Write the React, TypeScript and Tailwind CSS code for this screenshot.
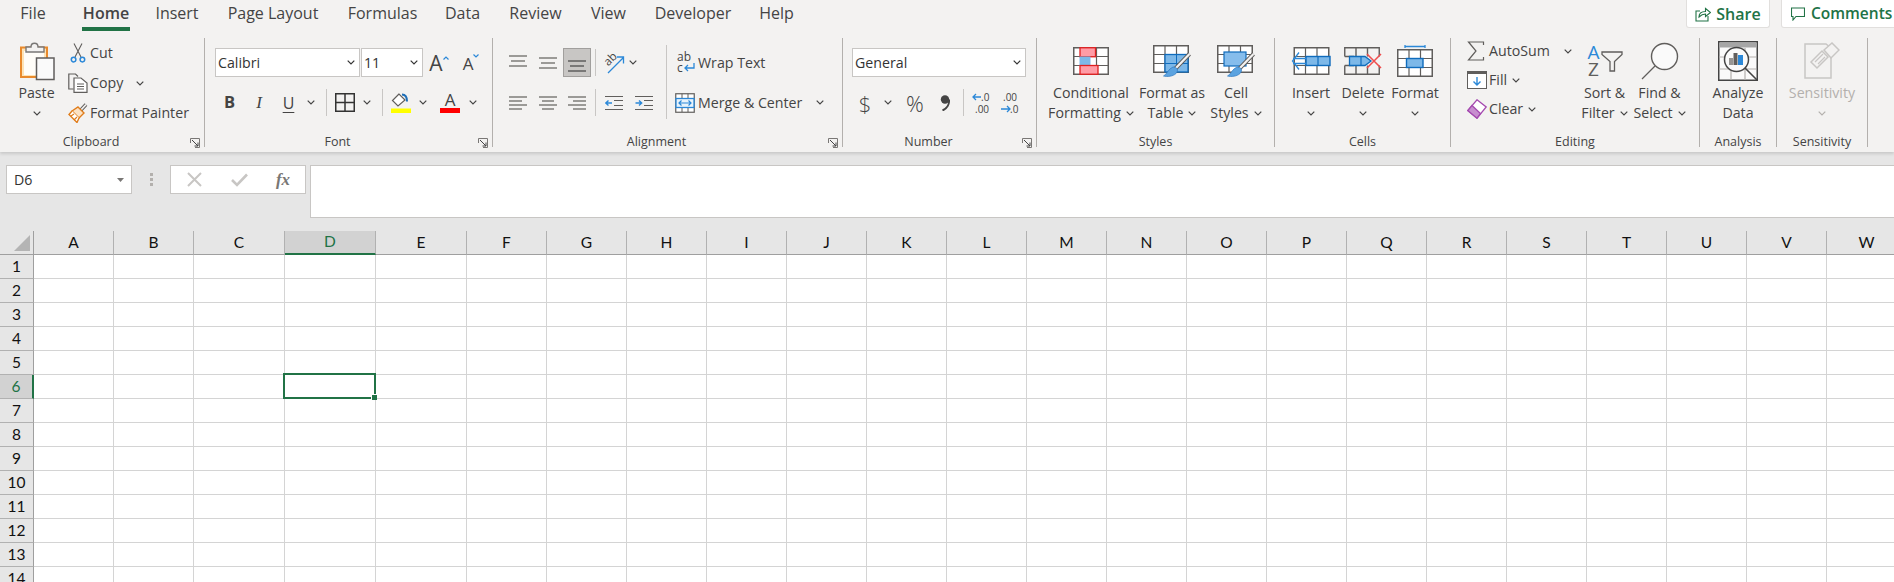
import React from "react";

const GREEN = "#217346";

function Chev({ color = "#444444" }: { color?: string }) {
  return (
    <svg width="8" height="5" viewBox="0 0 8 5" className="shrink-0">
      <polyline points="0.7,0.7 4,4 7.3,0.7" fill="none" stroke={color} strokeWidth="1.2" />
    </svg>
  );
}

function Launcher() {
  return (
    <svg width="10" height="10" viewBox="0 0 10 10">
      <path d="M0.5 5V0.5H9.5V9.5H5" fill="none" stroke="#797775" strokeWidth="1" />
      <path d="M2 2L8 8M8 4.5V8H4.5" fill="none" stroke="#444444" strokeWidth="1" />
    </svg>
  );
}

function Group({ w, label, launcher, children }: { w: string; label: string; launcher?: boolean; children: React.ReactNode }) {
  return (
    <div className={`${w} h-[109px] shrink-0 flex flex-col border-r border-[#b3b0ad]`}>
      <div className="h-[95px] shrink-0 flex">{children}</div>
      <div className="h-[19px] shrink-0 flex items-center text-[12.5px] text-[#444444]">
        <span className="flex-1 text-center">{label}</span>
        {launcher ? (
          <span className="w-[22px] shrink-0 flex justify-end pr-[4px]">
            <Launcher />
          </span>
        ) : null}
      </div>
    </div>
  );
}

function Big({ w, icon, a, b, chev, muted }: { w: string; icon: React.ReactNode; a: string; b?: string; chev?: boolean; muted?: boolean }) {
  const c = muted ? "text-[#b3b0ad]" : "text-[#444444]";
  return (
    <div className={`${w} shrink-0 flex flex-col items-center text-[14.2px] whitespace-nowrap ${c}`}>
      <div className="h-[45px] flex items-center justify-center">{icon}</div>
      <div className="h-[20px] leading-[20px]">{a}</div>
      <div className="h-[20px] leading-[20px] flex items-center gap-[5px]">
        {b ? <span>{b}</span> : null}
        {chev ? <Chev color={muted ? "#b3b0ad" : "#444444"} /> : null}
      </div>
    </div>
  );
}

function Slot({ w, children }: { w: string; children?: React.ReactNode }) {
  return <div className={`${w} h-full shrink-0 flex items-center justify-center`}>{children}</div>;
}

function Sep({ w }: { w: string }) {
  return (
    <div className={`${w} h-full shrink-0 flex items-center justify-center`}>
      <div className="w-px h-[27px] bg-[#c8c6c4]" />
    </div>
  );
}

function Box({ w, text, chevSlot }: { w: string; text: string; chevSlot: string }) {
  return (
    <div className={`${w} h-[29px] shrink-0 bg-white border border-[#c8c6c4] flex items-center justify-between text-[14.2px] text-[#333333]`}>
      <span className="pl-[2px]">{text}</span>
      <span className={`${chevSlot} flex justify-center`}>
        <Chev color="#333333" />
      </span>
    </div>
  );
}

function Lines({ ys, x1s, x2s, color = "#605e5c" }: { ys: number[]; x1s: number[]; x2s: number[]; color?: string }) {
  return (
    <svg width="18" height="16" viewBox="0 0 18 16">
      {ys.map((y, i) => (
        <line key={i} x1={x1s[i]} x2={x2s[i]} y1={y} y2={y} stroke={color} strokeWidth="1.2" />
      ))}
    </svg>
  );
}

function GridLines() {
  return (
    <g fill="none" stroke="#605e5c" strokeWidth="1.5">
      <rect x="0.75" y="0.75" width="34.5" height="26.5" fill="#ffffff" />
      <path d="M12 0.75V27.25M23.5 0.75V27.25M0.75 9.5H35.25M0.75 18.5H35.25" strokeWidth="1.2" />
    </g>
  );
}

function Brush() {
  return (
    <g>
      <path d="M36.5 9L22 24" stroke="#605e5c" strokeWidth="4" fill="none" />
      <path d="M36.5 9L22 24" stroke="#f3f2f1" strokeWidth="2.2" fill="none" />
      <path d="M20 22C24 22 26 25 23 28.5C20 31.5 14 32 10.5 31C14 29.5 15 24 20 22Z" fill="#5ba3e0" stroke="#2b79c2" strokeWidth="0.7" />
    </g>
  );
}

const IconPaste = (
  <svg width="36" height="40" viewBox="0 0 36 40">
    <rect x="2" y="6.5" width="26" height="29.5" fill="#fde3b6" stroke="#e98a2c" strokeWidth="2" />
    <rect x="5" y="10" width="20" height="24" fill="#fffdf8" />
    <path d="M7 11V6H12C12 1 19 1 19 6H25V11Z" fill="#f3f2f1" stroke="#797775" strokeWidth="1.4" />
    <rect x="17.5" y="17" width="17.5" height="21.5" fill="#fafafa" stroke="#605e5c" strokeWidth="1.5" />
  </svg>
);

const IconCut = (
  <svg width="16" height="20" viewBox="0 0 16 20">
    <path d="M4 0.5L11 14M12 0.5L5 14" fill="none" stroke="#605e5c" strokeWidth="1.1" />
    <circle cx="3.6" cy="16.6" r="2.3" fill="none" stroke="#2b88d8" strokeWidth="1.5" />
    <circle cx="12.4" cy="16.6" r="2.3" fill="none" stroke="#2b88d8" strokeWidth="1.5" />
  </svg>
);

const IconCopy = (
  <svg width="20" height="20" viewBox="0 0 20 20">
    <path d="M5.5 16H0.8V1H7.5L10 3.5" fill="none" stroke="#605e5c" strokeWidth="1.2" />
    <path d="M6 5H13L19 10V19.3H6Z" fill="#ffffff" stroke="#605e5c" strokeWidth="1.2" />
    <path d="M9 11H16M9 13.5H16M9 16H16" stroke="#605e5c" strokeWidth="1" />
  </svg>
);

const IconPainter = (
  <svg width="20" height="20" viewBox="0 0 20 20">
    <path d="M12 8L18 1.5" stroke="#605e5c" strokeWidth="3.6" fill="none" />
    <path d="M12 8L18 1.5" stroke="#f3f2f1" strokeWidth="1.8" fill="none" />
    <path d="M10 4L16 10L11 15L4 8Z" fill="#fbe2c4" stroke="#e07c1a" strokeWidth="1.4" />
    <path d="M4 8L1 11.5L9 19.5L11 15" fill="#ffffff" stroke="#e07c1a" strokeWidth="1.4" />
    <path d="M3 13L6 11M6 17L9 14" stroke="#e07c1a" strokeWidth="1.2" />
  </svg>
);

const IconCond = (
  <svg width="36" height="28" viewBox="0 0 36 28">
    <GridLines />
    <rect x="7" y="0.75" width="15.5" height="9" fill="#ff9ca6" stroke="#e02020" strokeWidth="1.3" />
    <rect x="7" y="10" width="10" height="8.5" fill="#7db8e8" stroke="#7db8e8" />
    <rect x="7" y="18.5" width="18" height="8.75" fill="#ff9ca6" stroke="#e02020" strokeWidth="1.3" />
  </svg>
);

const IconTable = (
  <svg width="38" height="32" viewBox="0 0 38 32">
    <GridLines />
    <rect x="12" y="9.5" width="23" height="17.5" fill="#7db8e8" stroke="#0f6cbd" strokeWidth="1.3" />
    <path d="M23.5 9.5V27M12 18.5H35" stroke="#0f6cbd" strokeWidth="1" />
    <Brush />
  </svg>
);

const IconStyles = (
  <svg width="38" height="32" viewBox="0 0 38 32">
    <GridLines />
    <rect x="7" y="7" width="22" height="14" fill="#86bdec" stroke="#0f6cbd" strokeWidth="1.2" />
    <Brush />
  </svg>
);

const IconInsert = (
  <svg width="40" height="28" viewBox="0 0 40 28">
    <g transform="translate(2.5,0)">
      <GridLines />
    </g>
    <rect x="15" y="9.5" width="24" height="9" fill="#7db8e8" stroke="#0f6cbd" strokeWidth="1.4" />
    <path d="M27 9.5V18.5" stroke="#0f6cbd" strokeWidth="1.2" />
    <path d="M8 5.5L1.5 14L8 22.5M2 11.5H16M2 16.5H16" fill="none" stroke="#2b88d8" strokeWidth="1.3" />
  </svg>
);

const IconDelete = (
  <svg width="38" height="28" viewBox="0 0 38 28">
    <path d="M0.75 9.5V0.75H35.25V9.5M0.75 18.5V27.25H35.25V18.5M12 0.75V9.5M23.5 0.75V9.5M12 18.5V27.25M23.5 18.5V27.25M0.75 9.5H10M0.75 18.5H10" fill="none" stroke="#605e5c" strokeWidth="1.4" />
    <path d="M5.5 9.5H21L27 14L21 18.5H5.5Z" fill="#7db8e8" stroke="#0f6cbd" strokeWidth="1.3" />
    <path d="M17 9.5V18.5" stroke="#0f6cbd" strokeWidth="1.2" />
    <path d="M23 7L37 21M37 7L23 21" stroke="#ef4d4d" strokeWidth="1.5" />
  </svg>
);

const IconFormat = (
  <svg width="36" height="32" viewBox="0 0 36 32">
    <path d="M8 1.5H28M8 0V3M28 0V3" stroke="#2b88d8" strokeWidth="1.3" />
    <g transform="translate(0,4)">
      <GridLines />
      <rect x="9.5" y="9.5" width="16.5" height="9" fill="#7db8e8" stroke="#0f6cbd" strokeWidth="1.4" />
    </g>
  </svg>
);

const IconSigma = (
  <svg width="18" height="20" viewBox="0 0 18 20" className="-ml-[3px]">
    <path d="M16.5 4V1H1.5L9 10L1.5 19H16.5V16" fill="none" stroke="#605e5c" strokeWidth="1.2" />
  </svg>
);

const IconFill = (
  <svg width="20" height="18" viewBox="0 0 20 18">
    <rect x="0.5" y="0.5" width="19" height="17" fill="#ffffff" stroke="#605e5c" strokeWidth="1" />
    <rect x="0" y="0" width="20" height="3" fill="#605e5c" />
    <path d="M10 6V14M6.5 10.5L10 14L13.5 10.5" fill="none" stroke="#2b88d8" strokeWidth="1.4" />
  </svg>
);

const IconClear = (
  <svg width="20" height="20" viewBox="0 0 20 20">
    <path d="M10 0.8L19.2 8L10 19.2L0.8 11.5Z" fill="#ffffff" stroke="#a54ab0" strokeWidth="1.3" />
    <path d="M5 6.5L13.5 14.5L10 19.2L0.8 11.5Z" fill="#c78ecf" stroke="#a54ab0" strokeWidth="1.3" />
  </svg>
);

const IconSort = (
  <div className="flex items-center">
    <div className="w-[15px] flex flex-col items-center text-[19px] leading-[17px]">
      <span className="text-[#2b88d8]">A</span>
      <span className="text-[#605e5c]">Z</span>
    </div>
    <svg width="22" height="22" viewBox="0 0 22 22" className="mt-[2px]">
      <path d="M1 1H21V3.5L13.5 10.5V20H9V10.5L1 3.5Z" fill="none" stroke="#605e5c" strokeWidth="1.3" />
    </svg>
  </div>
);

const IconFind = (
  <svg width="38" height="38" viewBox="0 0 38 38">
    <circle cx="23.5" cy="14.5" r="13" fill="#fafafa" stroke="#605e5c" strokeWidth="1.4" />
    <path d="M14 24L1 37" stroke="#605e5c" strokeWidth="1.3" />
  </svg>
);

const IconAnalyze = (
  <svg width="40" height="40" viewBox="0 0 40 40">
    <rect x="0.75" y="0.75" width="38.5" height="38.5" fill="#fafafa" stroke="#444444" strokeWidth="1.5" />
    <rect x="1.5" y="1.5" width="37" height="5" fill="#a6a6a6" />
    <path d="M1 16H38M1 28H38M13 7V39M27 7V39" stroke="#b3b0ad" strokeWidth="1.2" />
    <circle cx="18.5" cy="18.5" r="12" fill="#fafafa" stroke="#444444" strokeWidth="1.5" />
    <path d="M27 27L39 39" stroke="#444444" strokeWidth="1.6" />
    <rect x="11" y="17" width="4" height="7" fill="#979593" />
    <rect x="15.5" y="12" width="4" height="12" fill="#605e5c" />
    <rect x="20" y="14" width="5" height="10" fill="#2b88d8" />
  </svg>
);

const IconSens = (
  <svg width="36" height="38" viewBox="0 0 36 38">
    <path d="M1 2H22L27 6V36H1Z" fill="#f3f2f1" stroke="#c8c6c4" strokeWidth="1.5" />
    <path d="M7 20L18 9L24 15L13 26Z" fill="#f3f2f1" stroke="#c8c6c4" strokeWidth="1.5" />
    <path d="M11 20L19 12M14 22L21 15" stroke="#c8c6c4" strokeWidth="1.2" />
    <path d="M20 8L28 1L35 8L27 16Z" fill="#f3f2f1" stroke="#c8c6c4" strokeWidth="1.5" />
  </svg>
);

const TAB_CLS = "h-[27px] leading-[27px] shrink-0 flex justify-center text-[16px] whitespace-nowrap text-[#444444]";

const COLS = ["A", "B", "C", "D", "E", "F", "G", "H", "I", "J", "K", "L", "M", "N", "O", "P", "Q", "R", "S", "T", "U", "V", "W"];
const ROWS = [1, 2, 3, 4, 5, 6, 7, 8, 9, 10, 11, 12, 13, 14];

export default function App() {
  return (
    <div className="w-[1894px] h-[582px] overflow-hidden bg-[#e6e6e6] [font-family:'Open_Sans',sans-serif]">
      {/* Ribbon */}
      <div className="h-[152px] bg-[#f3f2f1] shadow-[0_2px_3px_rgba(0,0,0,0.13)] relative">
        <div className="h-[38px] flex items-start">
          <div className={`${TAB_CLS} ml-[21px] w-[24px]`}>File</div>
          <div className="ml-[37px] w-[48px] shrink-0 flex flex-col">
            <div className={`${TAB_CLS} font-semibold`}>Home</div>
            <div className="h-[4px] bg-[#217346]" />
          </div>
          <div className={`${TAB_CLS} ml-[26px] w-[42px]`}>Insert</div>
          <div className={`${TAB_CLS} ml-[29px] w-[92px]`}>Page Layout</div>
          <div className={`${TAB_CLS} ml-[29px] w-[69px]`}>Formulas</div>
          <div className={`${TAB_CLS} ml-[28px] w-[35px]`}>Data</div>
          <div className={`${TAB_CLS} ml-[30px] w-[51px]`}>Review</div>
          <div className={`${TAB_CLS} ml-[30px] w-[35px]`}>View</div>
          <div className={`${TAB_CLS} ml-[29px] w-[76px]`}>Developer</div>
          <div className={`${TAB_CLS} ml-[29px] w-[33px]`}>Help</div>
          <div className="ml-auto w-[84px] h-[28px] shrink-0 bg-white border border-[#e1dfdd] border-t-0 rounded-b-[3px] flex items-center justify-center gap-[5px] text-[16px] font-semibold text-[#217346]">
            <svg width="16" height="16" viewBox="0 0 16 16" className="shrink-0">
              <path d="M5 5H1V15H13V10" fill="none" stroke={GREEN} strokeWidth="1.1" />
              <path d="M4 11C4 7 7 5.5 10.5 5.5V2.5L15.5 6.5L10.5 10.5V8C8 8 6 9 4 11Z" fill="none" stroke={GREEN} strokeWidth="1.1" />
            </svg>
            Share
          </div>
          <div className="ml-[11px] mr-[-30px] w-[143px] h-[28px] shrink-0 bg-white border border-[#e1dfdd] border-t-0 rounded-b-[3px] flex items-center pl-[9px] gap-[6px] text-[15.5px] font-semibold text-[#217346]">
            <svg width="14" height="14" viewBox="0 0 14 14" className="shrink-0">
              <path d="M0.5 1H13.5V9.5H5L2 13V9.5H0.5Z" fill="none" stroke={GREEN} strokeWidth="1.1" />
            </svg>
            Comments
          </div>
        </div>

        <div className="flex">
          <Group w="w-[205px]" label="Clipboard" launcher>
            <div className="pl-[7px]">
              <Big w="w-[59px]" icon={IconPaste} a="Paste" chev />
            </div>
            <div className="flex flex-col text-[14.2px] text-[#444444] whitespace-nowrap">
              <div className="h-[30px] flex items-center">
                <Slot w="w-[24px]">{IconCut}</Slot>
                Cut
              </div>
              <div className="h-[30px] flex items-center">
                <Slot w="w-[24px]">{IconCopy}</Slot>
                Copy
                <span className="ml-[13px]"><Chev /></span>
              </div>
              <div className="h-[30px] flex items-center">
                <Slot w="w-[24px]">{IconPainter}</Slot>
                Format Painter
              </div>
            </div>
          </Group>

          <Group w="w-[288px]" label="Font" launcher>
            <div className="pl-[10px] pt-[10px] flex flex-col text-[#444444]">
              <div className="h-[29px] flex items-center">
                <Box w="w-[145px]" text="Calibri" chevSlot="w-[16px]" />
                <div className="w-px shrink-0" />
                <Box w="w-[62px]" text="11" chevSlot="w-[16px]" />
                <Slot w="w-[32px]">
                  <div className="flex items-start text-[21px] leading-[24px]">
                    A
                    <svg width="6" height="4" viewBox="0 0 6 4" className="mt-[5px]"><polyline points="0.5,3.5 3,1 5.5,3.5" fill="none" stroke="#2b88d8" strokeWidth="1.2" /></svg>
                  </div>
                </Slot>
                <Slot w="w-[32px]">
                  <div className="flex items-start text-[17px] leading-[22px] pt-[3px]">
                    A
                    <svg width="6" height="4" viewBox="0 0 6 4" className="mt-[1px]"><polyline points="0.5,0.5 3,3 5.5,0.5" fill="none" stroke="#2b88d8" strokeWidth="1.2" /></svg>
                  </div>
                </Slot>
              </div>
              <div className="h-[29px] mt-[11px] flex items-center">
                <Slot w="w-[29px]"><span className="font-bold text-[16.5px] text-[#444444]">B</span></Slot>
                <Slot w="w-[30px]"><span className="italic text-[17px] [font-family:'Liberation_Serif',serif]">I</span></Slot>
                <Slot w="w-[29px]"><span className="underline underline-offset-[3px] text-[16px]">U</span></Slot>
                <Slot w="w-[16px]"><Chev /></Slot>
                <Sep w="w-[14px]" />
                <Slot w="w-[24px]">
                  <svg width="20" height="19" viewBox="0 0 20 19">
                    <rect x="0.75" y="0.75" width="18.5" height="17.5" fill="none" stroke="#333333" strokeWidth="1.5" />
                    <path d="M10 0.75V18.25M0.75 9.5H19.25" stroke="#333333" strokeWidth="1.5" />
                  </svg>
                </Slot>
                <Slot w="w-[20px]"><Chev /></Slot>
                <Sep w="w-[10px]" />
                <Slot w="w-[28px]">
                  <svg width="20" height="20" viewBox="0 0 20 20">
                    <path d="M8 1L1.5 7.5L7 13L14 7Z" fill="#ffffff" stroke="#605e5c" strokeWidth="1.2" />
                    <path d="M11 1.5C15 1.5 16 5 16 8.5" fill="none" stroke="#1f6fb8" strokeWidth="2" />
                    <rect x="0" y="15.5" width="20" height="4.5" fill="#ffff00" />
                  </svg>
                </Slot>
                <Slot w="w-[16px]"><Chev /></Slot>
                <Slot w="w-[38px]">
                  <div className="w-[20px] flex flex-col items-center">
                    <span className="text-[17px] leading-[16px] text-[#444444]">A</span>
                    <div className="w-[20px] h-[4.5px] bg-[#ff0000]" />
                  </div>
                </Slot>
                <Slot w="w-[8px]"><Chev /></Slot>
              </div>
            </div>
          </Group>

          <Group w="w-[350px]" label="Alignment" launcher>
            <div className="pl-[10px] pt-[10px] flex flex-col">
              <div className="h-[29px] flex items-center">
                <Slot w="w-[30px]"><Lines ys={[1, 6, 11]} x1s={[0, 2, 0]} x2s={[18, 16, 18]} /></Slot>
                <Slot w="w-[30px]"><Lines ys={[3, 8, 13]} x1s={[0, 2, 0]} x2s={[18, 16, 18]} /></Slot>
                <div className="w-[28px] h-[29px] shrink-0 bg-[#c8c6c4] border border-[#a19f9d] flex items-center justify-center pt-[3px]">
                  <Lines ys={[5, 10, 15]} x1s={[0, 2, 0]} x2s={[18, 16, 18]} color="#444444" />
                </div>
                <Sep w="w-[8px]" />
                <Slot w="w-[30px]">
                  <div className="relative w-[24px] h-[24px]">
                    <svg width="24" height="24" viewBox="0 0 24 24">
                      <path d="M6 22L21 7M15 6H21.5V12.5" fill="none" stroke="#2b88d8" strokeWidth="1.3" />
                    </svg>
                    <span className="absolute left-[1px] top-[1px] -rotate-45 text-[11.5px] leading-[13px] text-[#444444]">ab</span>
                  </div>
                </Slot>
                <Slot w="w-[8px]"><Chev /></Slot>
              </div>
              <div className="h-[29px] mt-[11px] flex items-center">
                <Slot w="w-[30px]"><Lines ys={[2, 6, 10, 14]} x1s={[0, 0, 0, 0]} x2s={[18, 13, 18, 13]} /></Slot>
                <Slot w="w-[30px]"><Lines ys={[2, 6, 10, 14]} x1s={[0, 3, 0, 3]} x2s={[18, 15, 18, 15]} /></Slot>
                <Slot w="w-[28px]"><Lines ys={[2, 6, 10, 14]} x1s={[0, 5, 0, 5]} x2s={[18, 18, 18, 18]} /></Slot>
                <Sep w="w-[8px]" />
                <Slot w="w-[30px]">
                  <svg width="18" height="16" viewBox="0 0 18 16">
                    <path d="M0 1.5H18M9 5.5H18M9 10.5H18M0 14.5H18" stroke="#605e5c" strokeWidth="1.2" />
                    <path d="M7 8H0.5M3.5 5.5L0.8 8L3.5 10.5" fill="none" stroke="#2b88d8" strokeWidth="1.4" />
                  </svg>
                </Slot>
                <Slot w="w-[30px]">
                  <svg width="18" height="16" viewBox="0 0 18 16">
                    <path d="M0 1.5H18M9 5.5H18M9 10.5H18M0 14.5H18" stroke="#605e5c" strokeWidth="1.2" />
                    <path d="M0.5 8H7M4 5.5L6.7 8L4 10.5" fill="none" stroke="#2b88d8" strokeWidth="1.4" />
                  </svg>
                </Slot>
              </div>
            </div>
            <div className="ml-[7px] mt-[7px] w-px h-[74px] bg-[#c8c6c4]" />
            <div className="pt-[10px] flex flex-col text-[14.2px] text-[#444444] whitespace-nowrap">
              <div className="h-[29px] flex items-center">
                <div className="w-[31px] shrink-0 flex justify-end pr-[2px]">
                  <svg width="20" height="24" viewBox="0 0 20 24">
                    <text x="1" y="10" fontSize="12" fill="#444444" fontFamily="Open Sans, sans-serif">ab</text>
                    <text x="1" y="21" fontSize="12" fill="#444444" fontFamily="Open Sans, sans-serif">c</text>
                    <path d="M18 12V17H9M12 14L9 17L12 20" fill="none" stroke="#2b88d8" strokeWidth="1.3" />
                  </svg>
                </div>
                Wrap Text
              </div>
              <div className="h-[29px] mt-[11px] flex items-center">
                <div className="w-[31px] shrink-0 flex justify-end pr-[3px]">
                  <svg width="20" height="20" viewBox="0 0 20 20">
                    <rect x="0.75" y="0.75" width="18.5" height="18.5" fill="#ffffff" stroke="#605e5c" strokeWidth="1.2" />
                    <rect x="1" y="5.5" width="18" height="9" fill="#e8f3fb" stroke="#2b88d8" strokeWidth="1.3" />
                    <path d="M4 10H16M6.5 7.5L4 10L6.5 12.5M13.5 7.5L16 10L13.5 12.5" fill="none" stroke="#2b88d8" strokeWidth="1.2" />
                    <path d="M7 0.75V5M13 0.75V5M7 15V19M13 15V19" stroke="#605e5c" />
                  </svg>
                </div>
                Merge &amp; Center
                <span className="ml-[14px]"><Chev /></span>
              </div>
            </div>
          </Group>

          <Group w="w-[194px]" label="Number" launcher>
            <div className="pl-[9px] pt-[10px] flex flex-col text-[#444444]">
              <Box w="w-[174px]" text="General" chevSlot="w-[16px]" />
              <div className="h-[29px] mt-[11px] flex items-center">
                <Slot w="w-[26px]"><span className="text-[22px] font-light leading-none">$</span></Slot>
                <Slot w="w-[20px]"><Chev /></Slot>
                <Slot w="w-[34px]"><span className="text-[22px] font-light leading-none">%</span></Slot>
                <Slot w="w-[26px]">
                  <svg width="10" height="16" viewBox="0 0 10 16">
                    <circle cx="5" cy="4.5" r="4.2" fill="#444444" />
                    <path d="M9 4.5C9.5 9 7 13.5 2.5 15.5" fill="none" stroke="#444444" strokeWidth="2" />
                  </svg>
                </Slot>
                <Sep w="w-[10px]" />
                <Slot w="w-[28px]">
                  <svg width="24" height="24" viewBox="0 0 24 24">
                    <text x="11" y="10" fontSize="10" fill="#444444" fontFamily="Open Sans, sans-serif">.0</text>
                    <text x="5" y="22" fontSize="10" fill="#444444" fontFamily="Open Sans, sans-serif">.00</text>
                    <path d="M11 6H3M6 3L3 6L6 9" fill="none" stroke="#2b88d8" strokeWidth="1.3" />
                  </svg>
                </Slot>
                <Slot w="w-[28px]">
                  <svg width="24" height="24" viewBox="0 0 24 24">
                    <text x="5" y="10" fontSize="10" fill="#444444" fontFamily="Open Sans, sans-serif">.00</text>
                    <text x="12" y="22" fontSize="10" fill="#444444" fontFamily="Open Sans, sans-serif">.0</text>
                    <path d="M3 18H12M9 15L12 18L9 21" fill="none" stroke="#2b88d8" strokeWidth="1.3" />
                  </svg>
                </Slot>
              </div>
            </div>
          </Group>

          <Group w="w-[238px]" label="Styles">
            <div className="pl-[9px] flex">
              <Big w="w-[90px]" icon={IconCond} a="Conditional" b="Formatting" chev />
              <Big w="w-[72px]" icon={IconTable} a="Format as" b="Table" chev />
              <Big w="w-[56px]" icon={IconStyles} a="Cell" b="Styles" chev />
            </div>
          </Group>

          <Group w="w-[176px]" label="Cells">
            <div className="pl-[10px] flex">
              <Big w="w-[52px]" icon={IconInsert} a="Insert" chev />
              <Big w="w-[52px]" icon={IconDelete} a="Delete" chev />
              <Big w="w-[52px]" icon={IconFormat} a="Format" chev />
            </div>
          </Group>

          <Group w="w-[249px]" label="Editing">
            <div className="w-[126px] shrink-0 pl-[14px] flex flex-col gap-px -mt-px text-[14.2px] text-[#444444] whitespace-nowrap">
              <div className="h-[28px] flex items-center">
                <Slot w="w-[24px]">{IconSigma}</Slot>
                AutoSum
                <span className="ml-[14px]"><Chev /></span>
              </div>
              <div className="h-[28px] flex items-center">
                <Slot w="w-[24px]">{IconFill}</Slot>
                Fill
                <span className="ml-[5px]"><Chev /></span>
              </div>
              <div className="h-[28px] flex items-center">
                <Slot w="w-[24px]">{IconClear}</Slot>
                Clear
                <span className="ml-[5px]"><Chev /></span>
              </div>
            </div>
            <Big w="w-[55px]" icon={IconSort} a="Sort &" b="Filter" chev />
            <Big w="w-[55px]" icon={IconFind} a="Find &" b="Select" chev />
          </Group>

          <Group w="w-[77px]" label="Analysis">
            <div className="w-full flex justify-center">
              <Big w="w-[70px]" icon={IconAnalyze} a="Analyze" b="Data" />
            </div>
          </Group>

          <Group w="w-[91px]" label="Sensitivity">
            <div className="w-full flex justify-center">
              <Big w="w-[80px]" icon={IconSens} a="Sensitivity" chev muted />
            </div>
          </Group>
        </div>
      </div>

      {/* Formula bar */}
      <div className="h-[79px] pl-[6px] pt-[13px] flex items-start">
        <div className="w-[126px] h-[29px] shrink-0 bg-white border border-[#c8c6c4] flex items-center justify-between pl-[7px] pr-[7px] text-[14.2px] text-[#333333]">
          D6
          <svg width="7" height="4" viewBox="0 0 7 4"><path d="M0 0H7L3.5 4Z" fill="#797775" /></svg>
        </div>
        <div className="w-[38px] h-[29px] shrink-0 flex flex-col items-center justify-center gap-[2px]">
          <div className="w-[3px] h-[3px] bg-[#b3b0ad]" />
          <div className="w-[3px] h-[3px] bg-[#b3b0ad]" />
          <div className="w-[3px] h-[3px] bg-[#b3b0ad]" />
        </div>
        <div className="w-[136px] h-[29px] shrink-0 bg-white border border-[#c8c6c4] flex items-center">
          <Slot w="w-[46px]">
            <svg width="15" height="15" viewBox="0 0 15 15"><path d="M1 1L14 14M14 1L1 14" stroke="#c8c6c4" strokeWidth="2" /></svg>
          </Slot>
          <Slot w="w-[44px]">
            <svg width="17" height="14" viewBox="0 0 17 14"><path d="M1 7L6 12L16 1.5" fill="none" stroke="#c8c6c4" strokeWidth="2.6" /></svg>
          </Slot>
          <Slot w="w-[44px]">
            <span className="italic font-bold text-[17px] text-[#797775] [font-family:'Liberation_Serif',serif]">fx</span>
          </Slot>
        </div>
        <div className="ml-[4px] h-[53px] flex-1 bg-white border border-r-0 border-[#c8c6c4]" />
      </div>

      {/* Sheet */}
      <div className="grid grid-cols-[34px_80px_80px_91px_91px_91px_repeat(18,80px)] auto-rows-[24px] [font-family:Lato,sans-serif] text-[15.5px] text-[#111111]">
        <div className="bg-[#e6e6e6] border-r border-b border-[#9f9f9f] flex items-end justify-end pr-[3px] pb-[3px]">
          <svg width="16" height="16" viewBox="0 0 16 16"><path d="M16 0V16H0Z" fill="#b4b4b4" /></svg>
        </div>
        {COLS.map((c) => (
          <div
            key={c}
            className={
              c === "D"
                ? "bg-[#d2d2d2] border-r border-[#b1b1b1] border-b-2 border-b-[#217346] flex items-center justify-center text-[#217346]"
                : "bg-[#e6e6e6] border-r border-[#b1b1b1] border-b border-b-[#9f9f9f] flex items-center justify-center"
            }
          >
            {c}
          </div>
        ))}
        {ROWS.map((r) => (
          <React.Fragment key={r}>
            <div
              className={
                r === 6
                  ? "bg-[#d2d2d2] border-r-2 border-r-[#217346] border-b border-b-[#b1b1b1] flex items-center justify-center text-[#217346]"
                  : "bg-[#e6e6e6] border-r border-r-[#9f9f9f] border-b border-b-[#b1b1b1] flex items-center justify-center"
              }
            >
              {r}
            </div>
            {COLS.map((c) => (
              <div key={c} className="relative bg-white border-r border-b border-[#d4d4d4]">
                {r === 6 && c === "D" ? (
                  <div className="absolute -left-[2px] -top-[2px] -right-px -bottom-px border-2 border-[#217346] z-10">
                    <div className="absolute -right-[3px] -bottom-[3px] w-[6px] h-[6px] bg-[#217346] border-l border-t border-white" />
                  </div>
                ) : null}
              </div>
            ))}
          </React.Fragment>
        ))}
      </div>
    </div>
  );
}
